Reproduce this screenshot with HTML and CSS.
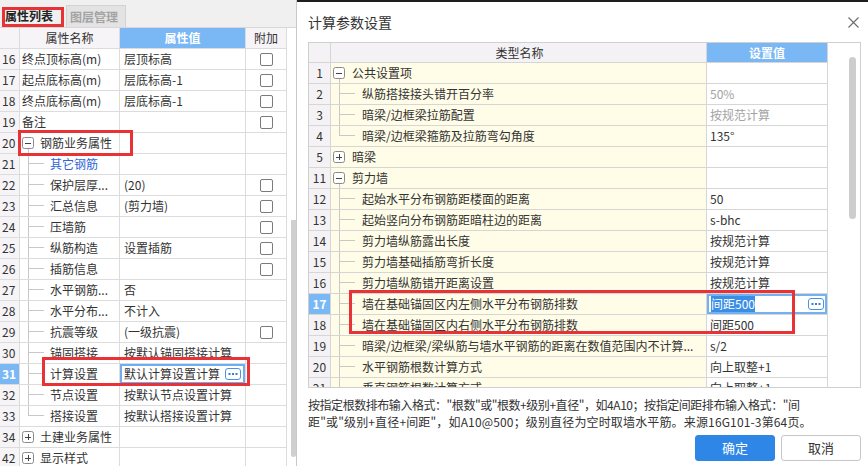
FILE: index.html
```html
<!DOCTYPE html>
<html lang="zh-CN">
<head>
<meta charset="utf-8">
<title>计算参数设置</title>
<link rel="stylesheet" href="styles.css">
</head>
<body>
<div class="app">
  <aside class="panel">
    <div class="tabbar">
      <div class="tab active">属性列表</div>
      <div class="tab idle">图层管理</div>
    </div>
    <div class="pbody">
      <div class="pgrid">
        <div class="prow phead">
          <div class="c num"></div>
          <div class="c name center">属性名称</div>
          <div class="c val hsel">属性值</div>
          <div class="c add">附加</div>
        </div>
        <div class="prow"><div class="c num">16</div><div class="c name">终点顶标高(m)</div><div class="c val">层顶标高</div><div class="c add"><span class="chk"></span></div></div>
        <div class="prow"><div class="c num">17</div><div class="c name">起点底标高(m)</div><div class="c val">层底标高-1</div><div class="c add"><span class="chk"></span></div></div>
        <div class="prow"><div class="c num">18</div><div class="c name">终点底标高(m)</div><div class="c val">层底标高-1</div><div class="c add"><span class="chk"></span></div></div>
        <div class="prow"><div class="c num">19</div><div class="c name">备注</div><div class="c val"></div><div class="c add"><span class="chk"></span></div></div>
        <div class="prow"><div class="c num">20</div><div class="c name"><span class="tg"><svg class="tbox" width="12" height="12" viewBox="0 0 12 12"><rect x=".5" y=".5" width="11" height="11" rx="2" fill="#fff" stroke="#8a8a8a"/><path d="M3 6.5h6" stroke="#444"/></svg><span class="stem"></span></span>钢筋业务属性</div><div class="c val"></div><div class="c add"></div></div>
        <div class="prow"><div class="c num">21</div><div class="c name"><span class="branch"><span class="up"></span><span class="dn"></span></span><span class="link">其它钢筋</span></div><div class="c val"></div><div class="c add"></div></div>
        <div class="prow"><div class="c num">22</div><div class="c name"><span class="branch"><span class="up"></span><span class="dn"></span></span>保护层厚...</div><div class="c val">(20)</div><div class="c add"><span class="chk"></span></div></div>
        <div class="prow"><div class="c num">23</div><div class="c name"><span class="branch"><span class="up"></span><span class="dn"></span></span>汇总信息</div><div class="c val">(剪力墙)</div><div class="c add"><span class="chk"></span></div></div>
        <div class="prow"><div class="c num">24</div><div class="c name"><span class="branch"><span class="up"></span><span class="dn"></span></span>压墙筋</div><div class="c val"></div><div class="c add"><span class="chk"></span></div></div>
        <div class="prow"><div class="c num">25</div><div class="c name"><span class="branch"><span class="up"></span><span class="dn"></span></span>纵筋构造</div><div class="c val">设置插筋</div><div class="c add"><span class="chk"></span></div></div>
        <div class="prow"><div class="c num">26</div><div class="c name"><span class="branch"><span class="up"></span><span class="dn"></span></span>插筋信息</div><div class="c val"></div><div class="c add"><span class="chk"></span></div></div>
        <div class="prow"><div class="c num">27</div><div class="c name"><span class="branch"><span class="up"></span><span class="dn"></span></span>水平钢筋...</div><div class="c val">否</div><div class="c add"></div></div>
        <div class="prow"><div class="c num">28</div><div class="c name"><span class="branch"><span class="up"></span><span class="dn"></span></span>水平分布...</div><div class="c val">不计入</div><div class="c add"></div></div>
        <div class="prow"><div class="c num">29</div><div class="c name"><span class="branch"><span class="up"></span><span class="dn"></span></span>抗震等级</div><div class="c val">(一级抗震)</div><div class="c add"><span class="chk"></span></div></div>
        <div class="prow"><div class="c num">30</div><div class="c name"><span class="branch"><span class="up"></span><span class="dn"></span></span>锚固搭接</div><div class="c val">按默认锚固搭接计算</div><div class="c add"></div></div>
        <div class="prow"><div class="c num sel">31</div><div class="c name"><span class="branch"><span class="up"></span><span class="dn"></span></span>计算设置</div><div class="c val edit"><span>默认计算设置计算</span><svg class="more" width="16" height="12" viewBox="0 0 16 12"><rect x=".5" y=".5" width="15" height="11" rx="2.5" fill="#fff" stroke="#4b92e3"/><rect x="3.5" y="5" width="2" height="2" fill="#3c7fd6"/><rect x="7" y="5" width="2" height="2" fill="#3c7fd6"/><rect x="10.5" y="5" width="2" height="2" fill="#3c7fd6"/></svg></div><div class="c add"></div></div>
        <div class="prow"><div class="c num">32</div><div class="c name"><span class="branch"><span class="up"></span><span class="dn"></span></span>节点设置</div><div class="c val">按默认节点设置计算</div><div class="c add"></div></div>
        <div class="prow"><div class="c num">33</div><div class="c name"><span class="branch last"><span class="up"></span><span class="dn"></span></span>搭接设置</div><div class="c val">按默认搭接设置计算</div><div class="c add"></div></div>
        <div class="prow"><div class="c num">34</div><div class="c name"><span class="tg"><svg class="tbox" width="12" height="12" viewBox="0 0 12 12"><rect x=".5" y=".5" width="11" height="11" rx="2" fill="#fff" stroke="#8a8a8a"/><path d="M3 6.5h6M6.5 3v6" stroke="#444"/></svg></span>土建业务属性</div><div class="c val"></div><div class="c add"></div></div>
        <div class="prow"><div class="c num">42</div><div class="c name"><span class="tg"><svg class="tbox" width="12" height="12" viewBox="0 0 12 12"><rect x=".5" y=".5" width="11" height="11" rx="2" fill="#fff" stroke="#8a8a8a"/><path d="M3 6.5h6M6.5 3v6" stroke="#444"/></svg></span>显示样式</div><div class="c val"></div><div class="c add"></div></div>
      </div>
      <div class="vscroll"><div class="vthumb"></div></div>
    </div>
  </aside>

  <section class="dialog">
    <div class="dlg-title">
      <span>计算参数设置</span>
      <svg class="close" width="11" height="11" viewBox="0 0 11 11"><path d="M.5.5l10 10M10.5.5l-10 10" stroke="#6a6a6a" stroke-width="1.1"/></svg>
    </div>
    <div class="ct">
      <div class="ct-main">
        <div class="drow dhead"><div class="d dn-col"></div><div class="d dname center">类型名称</div><div class="d dval hsel">设置值</div></div>
        <div class="drow"><div class="d dn-col">1</div><div class="d dname"><span class="tg wide"><svg class="tbox" width="12" height="12" viewBox="0 0 12 12"><rect x=".5" y=".5" width="11" height="11" rx="2" fill="#fff" stroke="#8a8a8a"/><path d="M3 6.5h6" stroke="#444"/></svg><span class="stem"></span></span>公共设置项</div><div class="d dval"></div></div>
        <div class="drow"><div class="d dn-col">2</div><div class="d dname"><span class="branch wide"><span class="up"></span><span class="dn"></span></span>纵筋搭接接头错开百分率</div><div class="d dval muted">50%</div></div>
        <div class="drow"><div class="d dn-col">3</div><div class="d dname"><span class="branch wide"><span class="up"></span><span class="dn"></span></span>暗梁/边框梁拉筋配置</div><div class="d dval muted">按规范计算</div></div>
        <div class="drow"><div class="d dn-col">4</div><div class="d dname"><span class="branch wide last"><span class="up"></span><span class="dn"></span></span>暗梁/边框梁箍筋及拉筋弯勾角度</div><div class="d dval">135°</div></div>
        <div class="drow"><div class="d dn-col">5</div><div class="d dname"><span class="tg wide"><svg class="tbox" width="12" height="12" viewBox="0 0 12 12"><rect x=".5" y=".5" width="11" height="11" rx="2" fill="#fff" stroke="#8a8a8a"/><path d="M3 6.5h6M6.5 3v6" stroke="#444"/></svg></span>暗梁</div><div class="d dval"></div></div>
        <div class="drow"><div class="d dn-col">11</div><div class="d dname"><span class="tg wide"><svg class="tbox" width="12" height="12" viewBox="0 0 12 12"><rect x=".5" y=".5" width="11" height="11" rx="2" fill="#fff" stroke="#8a8a8a"/><path d="M3 6.5h6" stroke="#444"/></svg><span class="stem"></span></span>剪力墙</div><div class="d dval"></div></div>
        <div class="drow"><div class="d dn-col">12</div><div class="d dname"><span class="branch wide"><span class="up"></span><span class="dn"></span></span>起始水平分布钢筋距楼面的距离</div><div class="d dval">50</div></div>
        <div class="drow"><div class="d dn-col">13</div><div class="d dname"><span class="branch wide"><span class="up"></span><span class="dn"></span></span>起始竖向分布钢筋距暗柱边的距离</div><div class="d dval">s-bhc</div></div>
        <div class="drow"><div class="d dn-col">14</div><div class="d dname"><span class="branch wide"><span class="up"></span><span class="dn"></span></span>剪力墙纵筋露出长度</div><div class="d dval">按规范计算</div></div>
        <div class="drow"><div class="d dn-col">15</div><div class="d dname"><span class="branch wide"><span class="up"></span><span class="dn"></span></span>剪力墙基础插筋弯折长度</div><div class="d dval">按规范计算</div></div>
        <div class="drow"><div class="d dn-col">16</div><div class="d dname"><span class="branch wide"><span class="up"></span><span class="dn"></span></span>剪力墙纵筋错开距离设置</div><div class="d dval">按规范计算</div></div>
        <div class="drow"><div class="d dn-col sel">17</div><div class="d dname"><span class="branch wide"><span class="up"></span><span class="dn"></span></span>墙在基础锚固区内左侧水平分布钢筋排数</div><div class="d dval edit"><span class="hl">间距500</span><svg class="more" width="16" height="12" viewBox="0 0 16 12"><rect x=".5" y=".5" width="15" height="11" rx="2.5" fill="#fff" stroke="#4b92e3"/><rect x="3.5" y="5" width="2" height="2" fill="#3c7fd6"/><rect x="7" y="5" width="2" height="2" fill="#3c7fd6"/><rect x="10.5" y="5" width="2" height="2" fill="#3c7fd6"/></svg></div></div>
        <div class="drow"><div class="d dn-col">18</div><div class="d dname"><span class="branch wide"><span class="up"></span><span class="dn"></span></span>墙在基础锚固区内右侧水平分布钢筋排数</div><div class="d dval">间距500</div></div>
        <div class="drow"><div class="d dn-col">19</div><div class="d dname"><span class="branch wide"><span class="up"></span><span class="dn"></span></span>暗梁/边框梁/梁纵筋与墙水平钢筋的距离在数值范围内不计算...</div><div class="d dval">s/2</div></div>
        <div class="drow"><div class="d dn-col">20</div><div class="d dname"><span class="branch wide"><span class="up"></span><span class="dn"></span></span>水平钢筋根数计算方式</div><div class="d dval">向上取整+1</div></div>
        <div class="drow"><div class="d dn-col">21</div><div class="d dname"><span class="branch wide"><span class="up"></span><span class="dn"></span></span>垂直钢筋根数计算方式</div><div class="d dval">向上取整+1</div></div>
      </div>
      <div class="ct-scroll"><div class="ct-thumb"></div></div>
    </div>
    <p class="hint"><span class="l1">按指定根数排布输入格式："根数"或"根数+级别+直径"，如4A10；按指定间距排布输入格式："间</span><br><span class="l2">距"或"级别+直径+间距"，如A10@500；级别直径为空时取墙水平筋。来源16G101-3第64页。</span></p>
    <div class="btns">
      <div class="btn ok">确定</div>
      <div class="btn cancel">取消</div>
    </div>
  </section>
</div>

<div class="mark m-tab"></div>
<div class="mark m-group"></div>
<div class="mark m-calc"></div>
<div class="mark m-dlg"></div>
</body>
</html>
```

FILE: styles.css
```css
* { box-sizing: border-box; margin: 0; padding: 0; }
html, body { width: 868px; height: 466px; overflow: hidden; }
body {
  font-family: "Noto Sans CJK SC", "Microsoft YaHei", sans-serif;
  font-size: 12px;
  color: #333;
  background: #fff;
  position: relative;
}
.app { display: flex; height: 466px; }

/* ---------- left property panel ---------- */
.panel {
  width: 297px;
  flex: none;
  border-right: 1px solid #c9c9c9;
  display: flex;
  flex-direction: column;
  overflow: hidden;
}
.tabbar {
  height: 28px;
  flex: none;
  background: #f0f0f0;
  border-bottom: 1px solid #d8d8d8;
  display: flex;
  align-items: flex-end;
  padding-left: 2px;
}
.tab { height: 22px; line-height: 22px; font-weight: bold; white-space: nowrap; }
.tab.active { width: 62px; padding-left: 3px; color: #222; }
.tab.idle {
  width: 60px;
  margin-left: 2px;
  padding-left: 3px;
  color: #a3a3a3;
  background: #e3e3e3;
  border: 1px solid #d2d2d2;
  border-bottom: none;
}
.pbody { display: flex; flex: 1; min-height: 0; }
.pgrid { width: 287px; flex: none; }
.prow { display: flex; height: 21px; border-bottom: 1px solid #dcdcdc; }
.c {
  height: 20px;
  line-height: 20px;
  border-right: 1px solid #dcdcdc;
  white-space: nowrap;
  overflow: hidden;
  flex: none;
}
.num { width: 20px; padding-left: 2px; background: #f6f4f7; }
.num.sel { background: #7ab8f5; color: #fff; font-weight: bold; }
.name { width: 100px; padding-left: 2px; display: flex; align-items: center; }
.val { width: 126px; padding-left: 4px; }
.add { width: 41px; display: flex; align-items: center; justify-content: center; }
.center { justify-content: center; text-align: center; padding-left: 0; }
.phead { background: #f6f4f7; }
.phead .name { display: block; }
.hsel { background: #7ab8f5; color: #fff; font-weight: bold; text-align: center; padding-left: 0; }
.link { color: #2f64d8; }
.chk {
  width: 13px; height: 13px;
  border: 1px solid #7b7b7b;
  border-radius: 2px;
  background: #fff;
}
.val.edit {
  display: flex;
  align-items: center;
  justify-content: space-between;
  padding-right: 4px;
  box-shadow: inset 0 0 0 2px #6eaef0;
}
.more { display: block; flex: none; }

/* tree connectors */
.tg {
  width: 12px; height: 20px;
  display: flex; flex-direction: column; align-items: center;
  margin-right: 6px; flex: none;
}
.tg.wide { margin-right: 7px; }
.tbox { display: block; margin-top: 4px; flex: none; }
.stem { flex: 1; width: 0; border-left: 1px solid #c8c8c8; }
.branch {
  width: 16px; height: 20px;
  display: flex; flex-direction: column;
  margin-left: 6px; margin-right: 6px; flex: none;
}
.branch.wide { margin-right: 7px; }
.branch .up { height: 10px; border-left: 1px solid #c8c8c8; border-bottom: 1px solid #c8c8c8; }
.branch .dn { flex: 1; border-left: 1px solid #c8c8c8; }
.branch.last .dn { border-left: none; }

.vscroll { width: 9px; flex: none; padding-top: 192px; }
.vthumb { margin-left: 4px; width: 5px; height: 237px; background: #cfcfcf; border-radius: 0 0 3px 3px; }

/* ---------- dialog ---------- */
.dialog {
  flex: 1;
  border-top: 2px solid #1e1e1e;
  padding: 0 7px 0 11px;
  display: flex;
  flex-direction: column;
}
.dlg-title {
  height: 40px;
  flex: none;
  display: flex;
  align-items: center;
  justify-content: space-between;
  padding-right: 2px;
  font-size: 14px;
  color: #333;
}
.close { display: block; }
.ct {
  height: 346px;
  flex: none;
  display: flex;
  border: 1px solid #cfcfcf;
  overflow: hidden;
}
.ct-main { width: 519px; flex: none; overflow: hidden; }
.drow { display: flex; height: 21px; border-bottom: 1px solid #d6d6d6; }
.dhead { height: 20px; background: #f5f2f6; }
.d {
  height: 20px;
  line-height: 20px;
  border-right: 1px solid #d6d6d6;
  white-space: nowrap;
  overflow: hidden;
  flex: none;
}
.dhead .d { height: 19px; line-height: 19px; }
.dn-col { width: 22px; text-align: center; background: #f5f2f6; }
.dn-col.sel { background: #7ab8f5; color: #fff; font-weight: bold; }
.dname { width: 376px; padding-left: 2px; display: flex; align-items: center; background: #fffde7; }
.dhead .dname { background: #f5f2f6; display: block; }
.dval { width: 121px; padding-left: 3px; background: #fff; }
.dhead .dval { background: #7ab8f5; padding-left: 0; }
.muted { color: #a3a3a3; }
.dval.edit {
  display: flex;
  align-items: center;
  justify-content: space-between;
  padding-left: 4px;
  padding-right: 3px;
  box-shadow: inset 0 0 0 2px #72b2f2;
}
.hl { background: #3a8ee6; color: #fff; line-height: 16px; }
.ct-scroll { flex: 1; padding-top: 14px; }
.ct-thumb { margin-left: 21px; width: 7px; height: 162px; background: #cdcdcd; border-radius: 4px; }

.hint { margin-top: 8px; line-height: 17px; white-space: nowrap; color: #333; }
.hint .l1 { letter-spacing: -0.45px; }
.hint .l2 { letter-spacing: 0.15px; }
.btns { margin-top: 5px; display: flex; justify-content: flex-end; gap: 6px; }
.btn {
  width: 80px; height: 26px;
  border-radius: 3px;
  font-size: 13px;
  line-height: 24px;
  text-align: center;
}
.ok { background: #2e86e6; border: 1px solid #2e86e6; color: #fff; }
.cancel { background: #fff; border: 1px solid #c6c6c6; color: #333; }

/* ---------- red annotation boxes ---------- */
.mark { position: absolute; border: 3px solid #e93236; pointer-events: none; }
.m-tab { left: 2px; top: 7px; width: 62px; height: 20px; }
.m-group { left: 18px; top: 130px; width: 115px; height: 26px; }
.m-calc { left: 42px; top: 357px; width: 208px; height: 29px; }
.m-dlg { left: 349px; top: 290px; width: 446px; height: 44px; }
```
